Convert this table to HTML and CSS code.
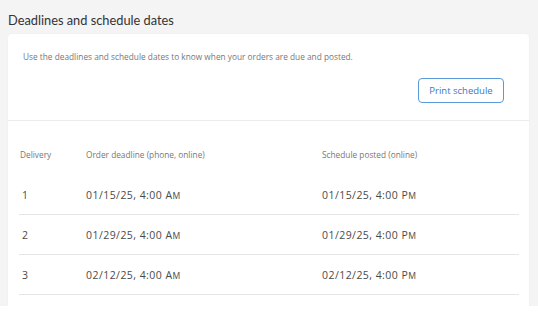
FILE: index.html
```html
<!DOCTYPE html>
<html>
<head>
<meta charset="utf-8">
<link rel="stylesheet" href="styles.css">
</head>
<body>
<div class="page">
  <h1 class="title">Deadlines and schedule dates</h1>
  <div class="card">
    <div class="intro">
      <p class="desc">Use the deadlines and schedule dates to know when your orders are due and posted.</p>
      <div class="actions"><button class="btn">Print schedule</button></div>
    </div>
    <div class="table">
      <div class="row head">
        <div class="c1">Delivery</div>
        <div class="c2">Order deadline (phone, online)</div>
        <div class="c3">Schedule posted (online)</div>
      </div>
      <div class="row">
        <div class="c1">1</div>
        <div class="c2">01/15/25, 4:00 A<span class="sm">M</span></div>
        <div class="c3">01/15/25, 4:00 P<span class="sm">M</span></div>
      </div>
      <div class="row">
        <div class="c1">2</div>
        <div class="c2">01/29/25, 4:00 A<span class="sm">M</span></div>
        <div class="c3">01/29/25, 4:00 P<span class="sm">M</span></div>
      </div>
      <div class="row">
        <div class="c1">3</div>
        <div class="c2">02/12/25, 4:00 A<span class="sm">M</span></div>
        <div class="c3">02/12/25, 4:00 P<span class="sm">M</span></div>
      </div>
    </div>
  </div>
</div>
</body>
</html>
```
FILE: styles.css
```css
html, body {
  margin: 0;
  padding: 0;
  background: #ffffff;
}
body {
  font-family: "Open Sans", "DejaVu Sans", sans-serif;
  color: #444;
}
.page {
  background: #f4f4f4;
  padding: 0 9px 0 8px;
}
.title {
  margin: 0;
  height: 34px;
  line-height: 41px;
  font-family: Lato, "Open Sans", sans-serif;
  font-size: 12.8px;
  font-weight: 400;
  color: #333;
  letter-spacing: 0;
}
.card {
  background: #fff;
  border-radius: 4px 4px 0 0;
  box-shadow: 0 0 2px rgba(0,0,0,0.04);
  padding-bottom: 11px;
}
.intro {
  padding: 16px 25px 0 15px;
  height: 70px;
  border-bottom: 1px solid #ececec;
  display: flex;
  flex-direction: column;
}
.desc {
  margin: 0;
  font-size: 8.3px;
  line-height: 14px;
  color: #777;
}
.actions {
  display: flex;
  justify-content: flex-end;
  margin-top: 14px;
}
.btn {
  font-family: inherit;
  width: 86px;
  height: 25px;
  background: #fff;
  border: 1.5px solid #5b9ad9;
  border-radius: 4px;
  color: #3a78c2;
  font-size: 9.5px;
  padding: 0;
}
.table {
  padding: 0 10px 0 11px;
}
.row {
  display: flex;
  align-items: center;
  height: 39px;
  border-bottom: 1px solid #e6e6e6;
  font-size: 10.5px;
  letter-spacing: 0.45px;
  color: #4a4a4a;
}
.row.head {
  height: 54px;
  padding-top: 13px;
  box-sizing: border-box;
  border-bottom: none;
  font-size: 8.3px;
  letter-spacing: 0;
  color: #777;
}
.c1 {
  width: 66px;
  padding-left: 1px;
}
.row:not(.head) .c1 { padding-left: 3px; width: 64px; }
.c2 {
  width: 236px;
}
.sm {
  font-size: 0.82em;
}
```
